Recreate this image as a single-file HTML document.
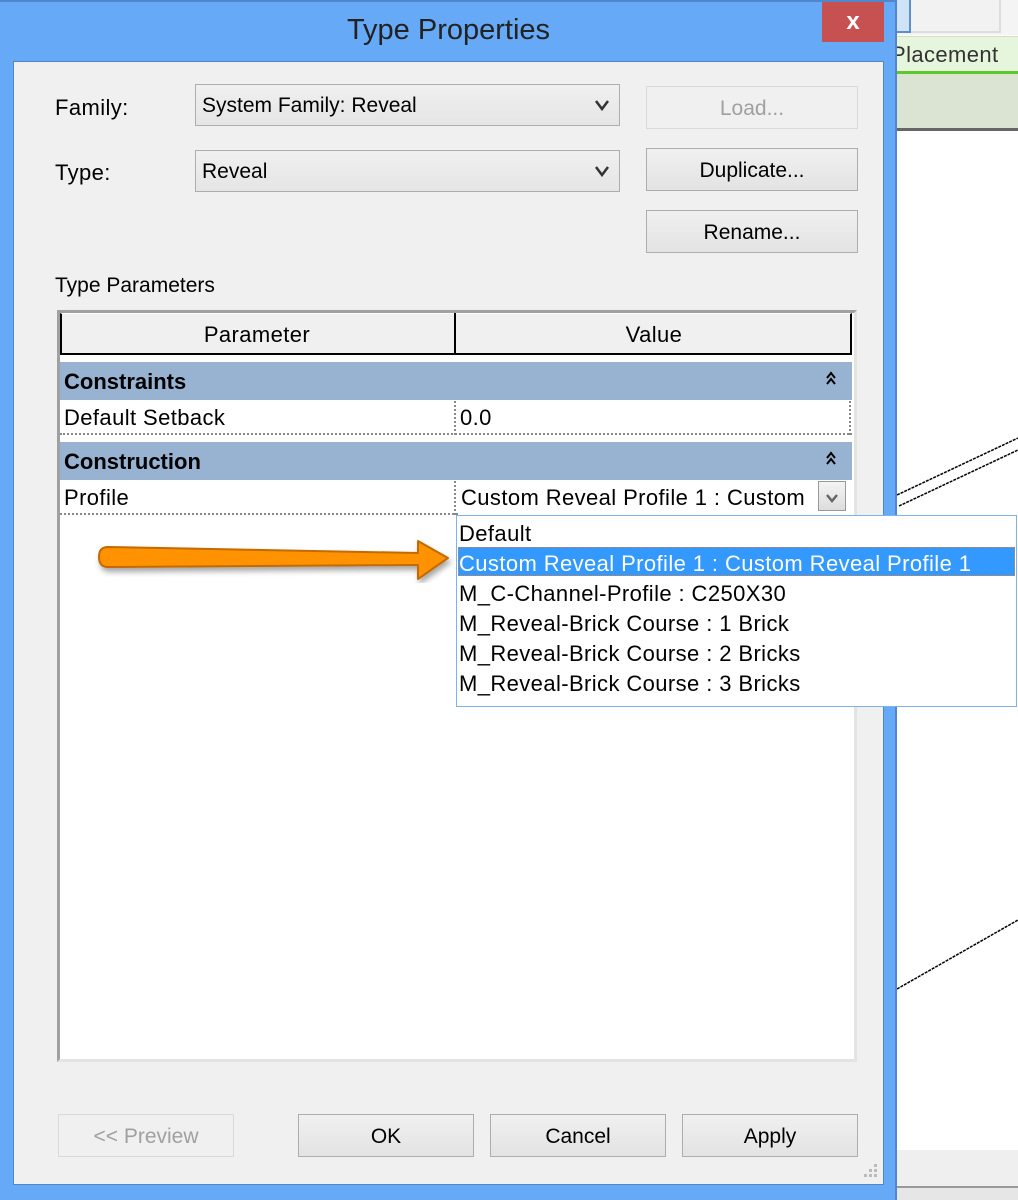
<!DOCTYPE html>
<html><head><style>
*{margin:0;padding:0;box-sizing:border-box}
body{width:1018px;height:1200px;position:relative;overflow:hidden;background:#fff;font-family:"Liberation Sans",sans-serif;color:#000}
.a{position:absolute}
.btn{position:absolute;border:1px solid #adadad;background:linear-gradient(#f0f0f0,#e3e3e3);font-size:21px;text-align:center;line-height:43px;color:#000}
.combo{position:absolute;border:1px solid #adadad;background:linear-gradient(#f0f0f0,#e5e5e5);font-size:21px;line-height:42px;padding-left:6px}
.combo svg{position:absolute;right:10px;top:14px}
.t{font-size:22px;letter-spacing:0.4px;position:absolute;white-space:nowrap}
.dl{border-bottom:2px dotted #888}
</style></head><body>
<div class="a" style="left:897px;top:0;width:121px;height:35px;background:#f4f4f4"></div>
<div class="a" style="left:897px;top:0;width:14px;height:33px;background:#cfe2f6;border-right:2px solid #5b8fd0;border-bottom:2px solid #5b8fd0"></div>
<div class="a" style="left:911px;top:0;width:90px;height:33px;background:#f2f2f2;border-right:2px solid #ddd;border-bottom:2px solid #ddd"></div>
<div class="a" style="left:897px;top:36px;width:121px;height:36px;background:#e6f6dc;border-top:1px solid #cfe0c6"></div>
<div class="t" style="left:891px;top:42px;color:#333">Placement</div>
<div class="a" style="left:897px;top:71px;width:121px;height:3px;background:#5cc82a"></div>
<div class="a" style="left:897px;top:74px;width:121px;height:56px;background:#dbe3d2"></div>
<div class="a" style="left:897px;top:128px;width:121px;height:3px;background:#666"></div>
<svg class="a" style="left:897px;top:420px" width="121" height="600">
<line x1="0" y1="75" x2="121" y2="18" stroke="#000" stroke-width="1.5" stroke-dasharray="3 1"/>
<line x1="2" y1="86" x2="121" y2="30" stroke="#000" stroke-width="1.5" stroke-dasharray="3 1"/>
<line x1="0" y1="569" x2="121" y2="500" stroke="#000" stroke-width="1.5" stroke-dasharray="3 1"/>
</svg>
<div class="a" style="left:897px;top:1150px;width:121px;height:36px;background:#efefef"></div>
<div class="a" style="left:897px;top:1186px;width:121px;height:2px;background:#999"></div>
<div class="a" style="left:897px;top:1188px;width:121px;height:12px;background:#e6e6e6"></div>
<div class="a" style="left:0;top:0;width:897px;height:1200px;background:#66a9f6;border-right:2px solid #4f86cc;border-top:2px solid #4f86cc"></div>
<div class="a" style="left:0;top:14px;width:897px;text-align:center;font-size:29px;color:#222">Type Properties</div>
<div class="a" style="left:822px;top:2px;width:62px;height:40px;background:#c75050;color:#fff;font-size:24px;text-align:center;line-height:40px;font-weight:bold">x</div>
<div class="a" style="left:13px;top:61px;width:871px;height:1124px;background:#f0f0f0;border:1px solid #4f86cc"></div>
<div class="t" style="left:55px;top:95px">Family:</div>
<div class="t" style="left:55px;top:160px">Type:</div>
<div class="combo" style="left:195px;top:84px;width:425px;height:42px">System Family: Reveal<svg width="14" height="12"><path d="M1 2 L7 10 L13 2" fill="none" stroke="#333" stroke-width="2.5"/></svg></div>
<div class="combo" style="left:195px;top:150px;width:425px;height:42px">Reveal<svg width="14" height="12"><path d="M1 2 L7 10 L13 2" fill="none" stroke="#333" stroke-width="2.5"/></svg></div>
<div class="btn" style="left:646px;top:86px;width:212px;height:43px;color:#a0a0a0;border-color:#d9d9d9;background:#f0f0f0">Load...</div>
<div class="btn" style="left:646px;top:148px;width:212px;height:43px">Duplicate...</div>
<div class="btn" style="left:646px;top:210px;width:212px;height:43px">Rename...</div>
<div class="t" style="left:55px;top:274px;font-size:21px;letter-spacing:0">Type Parameters</div>
<div class="a" style="left:57px;top:310px;width:800px;height:752px;background:#fff;border:3px solid #a0a0a0;border-right-color:#e3e3e3;border-bottom-color:#e3e3e3"></div>
<div class="a" style="left:60px;top:313px;width:792px;height:42px;background:#f0f0f0;border:2px solid #000;border-top:1px solid #fff"></div>
<div class="a" style="left:454px;top:313px;width:2px;height:42px;background:#000"></div>
<div class="t" style="left:60px;top:322px;width:394px;text-align:center">Parameter</div>
<div class="t" style="left:456px;top:322px;width:396px;text-align:center">Value</div>
<div class="a" style="left:60px;top:362px;width:792px;height:38px;background:#98b3d2"></div>
<div class="t" style="left:64px;top:369px;font-weight:bold;letter-spacing:0">Constraints</div>
<svg class="a" style="left:825px;top:370px" width="12" height="16"><path d="M2 8 L6 3 L10 8 M2 14 L6 9 L10 14" fill="none" stroke="#000" stroke-width="2"/></svg>
<div class="t" style="left:64px;top:405px">Default Setback</div>
<div class="t" style="left:460px;top:405px">0.0</div>
<div class="a dl" style="left:60px;top:433px;width:792px"></div>
<div class="a" style="left:454px;top:401px;height:34px;border-left:2px dotted #888"></div>
<div class="a" style="left:849px;top:401px;height:34px;border-left:2px dotted #888"></div>
<div class="a" style="left:60px;top:442px;width:792px;height:38px;background:#98b3d2"></div>
<div class="t" style="left:64px;top:449px;font-weight:bold;letter-spacing:0">Construction</div>
<svg class="a" style="left:825px;top:450px" width="12" height="16"><path d="M2 8 L6 3 L10 8 M2 14 L6 9 L10 14" fill="none" stroke="#000" stroke-width="2"/></svg>
<div class="t" style="left:64px;top:485px">Profile</div>
<div class="t" style="left:461px;top:485px">Custom Reveal Profile 1 : Custom</div>
<div class="a" style="left:818px;top:481px;width:28px;height:30px;border:1px solid #999;background:linear-gradient(#f4f4f4,#ddd)"><svg style="position:absolute;left:7px;top:11px" width="12" height="10"><path d="M1 2 L6 8 L11 2" fill="none" stroke="#666" stroke-width="2.5"/></svg></div>
<div class="a dl" style="left:60px;top:513px;width:398px"></div>
<div class="a" style="left:454px;top:481px;height:34px;border-left:2px dotted #888"></div>
<div class="a" style="left:456px;top:515px;width:561px;height:192px;background:#fff;border:1px solid #7eb2ea"></div>
<div class="a" style="left:458px;top:547px;width:557px;height:29px;background:#3399ff;border:1px dotted #e08030"></div>
<div class="t" style="left:459px;top:521px">Default</div>
<div class="t" style="left:459px;top:551px;color:#fff">Custom Reveal Profile 1 : Custom Reveal Profile 1</div>
<div class="t" style="left:459px;top:581px">M_C-Channel-Profile : C250X30</div>
<div class="t" style="left:459px;top:611px">M_Reveal-Brick Course : 1 Brick</div>
<div class="t" style="left:459px;top:641px">M_Reveal-Brick Course : 2 Bricks</div>
<div class="t" style="left:459px;top:671px">M_Reveal-Brick Course : 3 Bricks</div>
<svg class="a" style="left:90px;top:530px" width="370" height="70">
<defs><filter id="s"><feDropShadow dx="2" dy="4" stdDeviation="3" flood-opacity="0.35"/></filter></defs>
<path d="M18 17 L328 23 L328 11 L358 28 L328 49 L328 35 L18 37 Q9 37 9 27 Q9 17 18 17 Z" fill="#ff9200" stroke="#c46a00" stroke-width="2" stroke-linejoin="round" filter="url(#s)"/>
</svg>
<div class="btn" style="left:58px;top:1114px;width:176px;height:43px;color:#a0a0a0;border-color:#d9d9d9;background:#f0f0f0">&lt;&lt; Preview</div>
<div class="btn" style="left:298px;top:1114px;width:176px;height:43px">OK</div>
<div class="btn" style="left:490px;top:1114px;width:176px;height:43px">Cancel</div>
<div class="btn" style="left:682px;top:1114px;width:176px;height:43px">Apply</div>
<svg class="a" style="left:860px;top:1162px" width="20" height="20"><g fill="#bbb"><rect x="14" y="2" width="3" height="3"/><rect x="9" y="7" width="3" height="3"/><rect x="14" y="7" width="3" height="3"/><rect x="4" y="12" width="3" height="3"/><rect x="9" y="12" width="3" height="3"/><rect x="14" y="12" width="3" height="3"/></g></svg>
</body></html>
